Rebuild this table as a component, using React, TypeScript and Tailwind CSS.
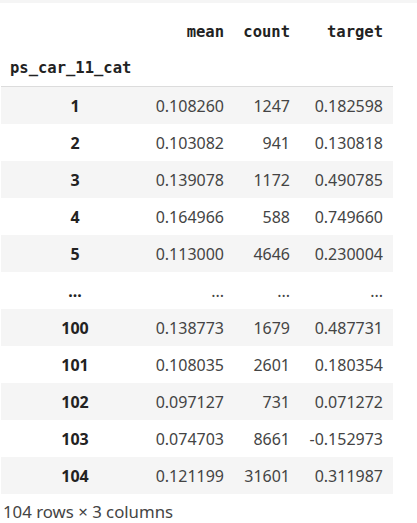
import React from "react";

const rows: [string, string, string, string][] = [
  ["1", "0.108260", "1247", "0.182598"],
  ["2", "0.103082", "941", "0.130818"],
  ["3", "0.139078", "1172", "0.490785"],
  ["4", "0.164966", "588", "0.749660"],
  ["5", "0.113000", "4646", "0.230004"],
  ["...", "...", "...", "..."],
  ["100", "0.138773", "1679", "0.487731"],
  ["101", "0.108035", "2601", "0.180354"],
  ["102", "0.097127", "731", "0.071272"],
  ["103", "0.074703", "8661", "-0.152973"],
  ["104", "0.121199", "31601", "0.311987"],
];

const grid = "grid grid-cols-[148px_85px_66px_93px]";
const mono = { fontFamily: '"DejaVu Sans Mono", "Liberation Mono", monospace' };

export default function App() {
  return (
    <div className="w-[417px] h-[523px] bg-white overflow-hidden" style={{ fontFamily: '"Noto Sans", "Open Sans", sans-serif' }}>
      <div className="h-[3px] bg-[#f5f5f5]" />
      <div className="ml-[1px] mt-[11px] w-[392px]">
        <div className={`${grid} h-[37px] items-center text-[15.5px] font-bold text-[#222]`} style={mono}>
          <div />
          <div className="text-right pr-[10px]">mean</div>
          <div className="text-right pr-[10px]">count</div>
          <div className="text-right pr-[10px]">target</div>
        </div>
        <div className={`${grid} h-[36px] items-center text-[15.5px] font-bold text-[#222] border-b border-[#dcdcdc]`} style={mono}>
          <div className="pl-[9px]">ps_car_11_cat</div>
          <div />
          <div />
          <div />
        </div>
        {rows.map((r, i) => (
          <div
            key={i}
            className={`${grid} h-[37px] items-center text-[16px] ${i % 2 === 0 ? "bg-[#f5f5f5]" : "bg-white"}`}
          >
            <div className="text-center font-bold text-[#222]">{r[0]}</div>
            <div className="text-right pr-[10px] text-[#444]">{r[1]}</div>
            <div className="text-right pr-[10px] text-[#444]">{r[2]}</div>
            <div className="text-right pr-[10px] text-[#444]">{r[3]}</div>
          </div>
        ))}
      </div>
      <div className="pl-[3px] mt-[7px] text-[16.8px] text-[#444] leading-[22px]">104 rows × 3 columns</div>
    </div>
  );
}
